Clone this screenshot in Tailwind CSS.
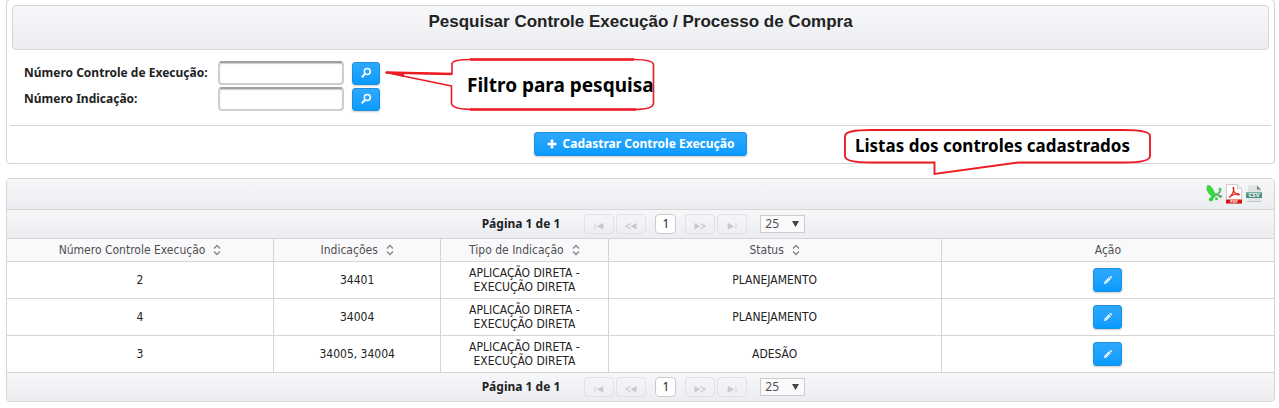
<!DOCTYPE html>
<html lang="pt-BR">
<head>
<meta charset="utf-8">
<meta name="viewport" content="width=device-width, initial-scale=1">
<title>Pesquisar Controle Execução / Processo de Compra</title>
<script src="https://cdn.jsdelivr.net/npm/@tailwindcss/browser@4"></script>
</head>
<body class="relative bg-white pr-1 pl-1.5 font-['Noto_Sans',sans-serif] text-xs text-[#222222]">
<svg class="hidden" aria-hidden="true">
  <symbol id="search" viewBox="0 0 12 12"><circle cx="7.3" cy="4.5" r="3" fill="none" stroke="#fff" stroke-width="1.5"/><path d="M5.2 6.8 1.8 10.2" stroke="#fff" stroke-width="2"/></symbol>
  <symbol id="pencil" viewBox="0 0 12 12"><path d="M1.2 10.8 1.8 8 7 2.8 9.2 5 4 10.2Z" fill="#fff"/><path d="M3 9 7.2 4.8" stroke="#3aa9f5" stroke-width="1" stroke-dasharray="1 .6"/><path d="M7.8 2 9 .9 11 3 9.9 4.1Z" fill="#fff"/></symbol>
  <symbol id="sort" viewBox="0 0 8 12"><path d="M1 4.5 4 1.5 7 4.5M1 7.5 4 10.5 7 7.5" fill="none" stroke="#858585" stroke-width="1.3"/></symbol>
  <symbol id="first" viewBox="0 0 12 8"><path d="M2 1.5V7M10 1.5V7L4.5 4.3Z" fill="#c9cacd" stroke="#c9cacd" stroke-width=".8"/></symbol>
  <symbol id="prev" viewBox="0 0 12 8"><path d="M5.5 1.5 1 4.2 5.5 7" fill="none" stroke="#c9cacd" stroke-width="1.2"/><path d="M11.5 1V7.5L5.5 4.2Z" fill="#c9cacd"/></symbol>
  <symbol id="next" viewBox="0 0 12 8"><path d="M.5 1V7.5L6.5 4.2Z" fill="#c9cacd"/><path d="M6.5 1.5 11 4.2 6.5 7" fill="none" stroke="#c9cacd" stroke-width="1.2"/></symbol>
  <symbol id="last" viewBox="0 0 12 8"><path d="M10 1.5V7M2 1.5V7L7.5 4.3Z" fill="#c9cacd" stroke="#c9cacd" stroke-width=".8"/></symbol>
</svg>

<main>
  <form class="-mt-px rounded border border-[#d5d5d5] px-[3px] pt-[5px] pb-[7px]">
    <header class="mx-0.5 h-[45px] rounded border border-[#d5d5d5] bg-linear-to-b from-[#f6f7f9] to-[#ebedf0] pt-1.5">
      <h1 class="text-center font-['Liberation_Sans',Arial,sans-serif] text-[17px] leading-5 font-bold">Pesquisar Controle Execução / Processo de Compra</h1>
    </header>
    <div class="grid grid-cols-[186px_126px_28px] items-center gap-x-2 gap-y-0.5 pt-[11px] pl-3.5 font-bold">
      <label for="controle" class="whitespace-nowrap">Número Controle de Execução:</label>
      <input id="controle" type="text" class="h-6 w-full rounded border-2 border-[#cfcfcf] border-t-[#a0a0a0] bg-white px-1 shadow-[inset_0_1px_1px_#cccccc]">
      <button type="button" aria-label="Pesquisar controle" class="flex h-[23px] items-center justify-center rounded-[3px] border border-[#1b8fe0] bg-linear-to-b from-[#2da8fd] to-[#069bff] shadow-[0_1px_2px_#cccccc]"><svg class="size-3"><use href="#search"/></svg></button>
      <label for="indicacao">Número Indicação:</label>
      <input id="indicacao" type="text" class="h-6 w-full rounded border-2 border-[#cfcfcf] border-t-[#a0a0a0] bg-white px-1 shadow-[inset_0_1px_1px_#cccccc]">
      <button type="button" aria-label="Pesquisar indicação" class="flex h-[23px] items-center justify-center rounded-[3px] border border-[#1b8fe0] bg-linear-to-b from-[#2da8fd] to-[#069bff] shadow-[0_1px_2px_#cccccc]"><svg class="size-3"><use href="#search"/></svg></button>
    </div>
    <hr class="mt-3.5 border-[#d5d5d5]">
    <div class="mt-1.5 flex justify-center">
      <button type="button" class="flex h-6 items-center gap-1.5 rounded-[3px] border border-[#1b8fe0] bg-linear-to-b from-[#2da8fd] to-[#069bff] px-3 font-bold whitespace-nowrap text-white shadow-[0_1px_2px_#cccccc]"><svg class="size-[10px]" viewBox="0 0 10 10"><path d="M5 .5V9.5M.5 5H9.5" stroke="#fff" stroke-width="2.6"/></svg>Cadastrar Controle Execução</button>
    </div>
  </form>

  <section class="mt-3.5 overflow-hidden rounded border border-[#d5d5d5]">
    <div class="flex h-[30px] items-center justify-end gap-1 bg-linear-to-b from-[#f6f7f9] to-[#ebedf0] pr-3">
      <a href="#" aria-label="Exportar Excel"><svg class="h-5 w-4" viewBox="0 0 16 20"><path d="M1.5 1.5Q4.500 1 6 4Q7.500 7 9.500 10.500Q10 13.500 7.500 13Q3 11.500 .8 5Z" fill="#2fe03a" stroke="#5aa865" stroke-width=".7"/><path d="M14.500 4.500Q14.500 9.500 10 10.500L15 12.500" fill="none" stroke="#63b873" stroke-width="2"/><path d="M8 12 5 15.500" stroke="#2bcf3a" stroke-width="2.400"/><circle cx="14" cy="5.200" r="1.400" fill="#3bdc49"/><circle cx="5" cy="15.300" r="2.100" fill="#22d738"/><circle cx="14.500" cy="12.500" r="1.400" fill="#6b9a78"/><circle cx="10.500" cy="14.800" r="1.500" fill="#33d044"/></svg></a>
      <a href="#" aria-label="Exportar PDF"><svg class="h-5 w-4" viewBox="0 0 16 20"><path d="M.5.5H11.5L15.5 4.5V19.5H.5Z" fill="#fff" stroke="#c4c4c4" stroke-width=".8"/><path d="M11.5.5V4.5H15.5" fill="#eee" stroke="#bbb" stroke-width=".6"/><path d="M3 13.5C5 12.5 8.5 7 7.8 4.2C7 1.5 6.5 6.5 9 9C11 11.2 14.2 11.5 13 10.1C11.5 9 6.5 10.3 3.2 13.5" fill="none" stroke="#e3261e" stroke-width="1.2"/><path d="M0 15.5H16V19.5H0Z" fill="#d81812"/><text x="8" y="19" text-anchor="middle" fill="#fff" class="text-[4px] font-bold">PDF</text></svg></a>
      <a href="#" aria-label="Exportar CSV"><svg class="h-5 w-4 overflow-visible" viewBox="0 0 16 20"><path d="M2 1.5H11L15 5.5V17.5H2Z" fill="#e1e2e3"/><path d="M11 1.5V5.5H15Z" fill="#777d7b"/><path d="M0 8H16V14H0Z" fill="#4a917c"/><path d="M0 8H16V9.5H0Z" fill="#7ab3a2"/><text x="8" y="13" text-anchor="middle" fill="#fff" class="text-[6px] font-bold">CSV</text><path d="M1 17.5H15" stroke="#c3c8c6"/></svg></a>
    </div>

    <nav aria-label="Paginação superior" class="flex h-[29px] items-center justify-center border-t border-[#d5d5d5] bg-linear-to-b from-[#f6f7f9] to-[#ebedf0] pl-1.5">
      <span class="mr-6 font-bold">Página 1 de 1</span>
      <div class="flex gap-0.5">
        <button type="button" disabled aria-label="Primeira" class="flex h-5 w-[30px] items-center justify-center rounded border border-[#e0e1e4]"><svg class="mt-1 h-2 w-3"><use href="#first"/></svg></button>
        <button type="button" disabled aria-label="Anterior" class="flex h-5 w-[30px] items-center justify-center rounded border border-[#e0e1e4]"><svg class="mt-1 h-2 w-3"><use href="#prev"/></svg></button>
      </div>
      <button type="button" aria-current="page" class="mx-[9px] flex h-5 w-[21px] items-center justify-center rounded border border-[#cccccc] bg-white">1</button>
      <div class="flex gap-0.5">
        <button type="button" disabled aria-label="Próxima" class="flex h-5 w-[30px] items-center justify-center rounded border border-[#e0e1e4]"><svg class="mt-1 h-2 w-3"><use href="#next"/></svg></button>
        <button type="button" disabled aria-label="Última" class="flex h-5 w-[30px] items-center justify-center rounded border border-[#e0e1e4]"><svg class="mt-1 h-2 w-3"><use href="#last"/></svg></button>
      </div>
      <div class="relative ml-[13px]">
        <select aria-label="Linhas por página" class="block h-[18px] w-[45px] appearance-none border border-[#cccccc] bg-[#fafafc] pl-1 leading-4 text-[#4f4f4f]"><option>25</option></select>
        <svg class="pointer-events-none absolute top-1.5 right-1.5 h-1.5 w-[7px]" viewBox="0 0 7 6"><path d="M0 0H7L3.5 6Z" fill="#444"/></svg>
      </div>
    </nav>

    <table class="w-full table-fixed border-separate border-spacing-0 text-center font-['DejaVu_Sans_Condensed','DejaVu_Sans',sans-serif] text-xs leading-[14px]">
      <colgroup><col class="w-[21%]"><col class="w-[13.2%]"><col class="w-[13.2%]"><col class="w-[26.3%]"><col class="w-[26.3%]"></colgroup>
      <thead class="bg-[#f9f9fb] text-[#4f4f4f]">
        <tr class="h-[23px]">
          <th class="border-t border-[#d5d5d5] font-normal"><span class="inline-flex items-center gap-2">Número Controle Execução<svg class="h-3 w-2"><use href="#sort"/></svg></span></th>
          <th class="border-t border-l border-[#d5d5d5] font-normal"><span class="inline-flex items-center gap-2">Indicações<svg class="h-3 w-2"><use href="#sort"/></svg></span></th>
          <th class="border-t border-l border-[#d5d5d5] font-normal"><span class="inline-flex items-center gap-2">Tipo de Indicação<svg class="h-3 w-2"><use href="#sort"/></svg></span></th>
          <th class="border-t border-l border-[#d5d5d5] font-normal"><span class="inline-flex items-center gap-2">Status<svg class="h-3 w-2"><use href="#sort"/></svg></span></th>
          <th class="border-t border-l border-[#d5d5d5] font-normal">Ação</th>
        </tr>
      </thead>
      <tbody>
        <tr class="h-[37px]">
          <td class="border-t border-[#d5d5d5]">2</td>
          <td class="border-t border-l border-[#d5d5d5]">34401</td>
          <td class="border-t border-l border-[#d5d5d5]">APLICAÇÃO DIRETA -<br>EXECUÇÃO DIRETA</td>
          <td class="border-t border-l border-[#d5d5d5]">PLANEJAMENTO</td>
          <td class="border-t border-l border-[#d5d5d5]"><button type="button" aria-label="Editar 2" class="mx-auto flex h-6 w-[29px] items-center justify-center rounded-[3px] border border-[#1b8fe0] bg-linear-to-b from-[#2da8fd] to-[#069bff] shadow-[0_1px_2px_#cccccc]"><svg class="size-[10px]"><use href="#pencil"/></svg></button></td>
        </tr>
        <tr class="h-[37px]">
          <td class="border-t border-[#d5d5d5]">4</td>
          <td class="border-t border-l border-[#d5d5d5]">34004</td>
          <td class="border-t border-l border-[#d5d5d5]">APLICAÇÃO DIRETA -<br>EXECUÇÃO DIRETA</td>
          <td class="border-t border-l border-[#d5d5d5]">PLANEJAMENTO</td>
          <td class="border-t border-l border-[#d5d5d5]"><button type="button" aria-label="Editar 4" class="mx-auto flex h-6 w-[29px] items-center justify-center rounded-[3px] border border-[#1b8fe0] bg-linear-to-b from-[#2da8fd] to-[#069bff] shadow-[0_1px_2px_#cccccc]"><svg class="size-[10px]"><use href="#pencil"/></svg></button></td>
        </tr>
        <tr class="h-[37px]">
          <td class="border-t border-[#d5d5d5]">3</td>
          <td class="border-t border-l border-[#d5d5d5]">34005, 34004</td>
          <td class="border-t border-l border-[#d5d5d5]">APLICAÇÃO DIRETA -<br>EXECUÇÃO DIRETA</td>
          <td class="border-t border-l border-[#d5d5d5]">ADESÃO</td>
          <td class="border-t border-l border-[#d5d5d5]"><button type="button" aria-label="Editar 3" class="mx-auto flex h-6 w-[29px] items-center justify-center rounded-[3px] border border-[#1b8fe0] bg-linear-to-b from-[#2da8fd] to-[#069bff] shadow-[0_1px_2px_#cccccc]"><svg class="size-[10px]"><use href="#pencil"/></svg></button></td>
        </tr>
      </tbody>
    </table>

    <nav aria-label="Paginação inferior" class="flex h-[29px] items-center justify-center border-t border-[#d5d5d5] bg-linear-to-b from-[#f6f7f9] to-[#ebedf0] pl-1.5">
      <span class="mr-6 font-bold">Página 1 de 1</span>
      <div class="flex gap-0.5">
        <button type="button" disabled aria-label="Primeira" class="flex h-5 w-[30px] items-center justify-center rounded border border-[#e0e1e4]"><svg class="mt-1 h-2 w-3"><use href="#first"/></svg></button>
        <button type="button" disabled aria-label="Anterior" class="flex h-5 w-[30px] items-center justify-center rounded border border-[#e0e1e4]"><svg class="mt-1 h-2 w-3"><use href="#prev"/></svg></button>
      </div>
      <button type="button" aria-current="page" class="mx-[9px] flex h-5 w-[21px] items-center justify-center rounded border border-[#cccccc] bg-white">1</button>
      <div class="flex gap-0.5">
        <button type="button" disabled aria-label="Próxima" class="flex h-5 w-[30px] items-center justify-center rounded border border-[#e0e1e4]"><svg class="mt-1 h-2 w-3"><use href="#next"/></svg></button>
        <button type="button" disabled aria-label="Última" class="flex h-5 w-[30px] items-center justify-center rounded border border-[#e0e1e4]"><svg class="mt-1 h-2 w-3"><use href="#last"/></svg></button>
      </div>
      <div class="relative ml-[13px]">
        <select aria-label="Linhas por página" class="block h-[18px] w-[45px] appearance-none border border-[#cccccc] bg-[#fafafc] pl-1 leading-4 text-[#4f4f4f]"><option>25</option></select>
        <svg class="pointer-events-none absolute top-1.5 right-1.5 h-1.5 w-[7px]" viewBox="0 0 7 6"><path d="M0 0H7L3.5 6Z" fill="#444"/></svg>
      </div>
    </nav>
  </section>
</main>

<aside class="absolute top-[57px] left-96 h-[54px] w-[271px] text-black">
  <svg class="absolute inset-0 h-full w-full" viewBox="0 0 271 54"><path d="M2 15.5 68 17V7Q68 2.5 88 2.5H250Q269.5 2.5 269.5 8V46Q269.5 52.5 250 52.5H90Q67.5 52.5 67.5 46V29Z" fill="#fff" stroke="#ed1c24" stroke-width="1.6" stroke-linejoin="round"/><path d="M2 15.5 68 17M86 2.5H250M86 52.5H252" stroke="#ed1c24" stroke-width="2.4"/><path d="M1 15.2 20 16.2 20 20Z" fill="#ed1c24"/></svg>
  <p class="relative pt-4 pl-[83px] text-[19px] leading-6 font-bold whitespace-nowrap">Filtro para pesquisa</p>
</aside>

<aside class="absolute top-[128px] left-[843px] h-[48px] w-[309px] text-black">
  <svg class="absolute inset-0 h-full w-full" viewBox="0 0 309 48"><path d="M2 8Q2 2 28 2H281Q307 2 307 8V28Q307 34.5 281 34.5H175L91.5 46V34.5H28Q2 34.5 2 28Z" fill="#fff" stroke="#ed1c24" stroke-width="1.9"/></svg>
  <p class="relative pt-1.5 pl-3 text-[17px] leading-6 font-bold whitespace-nowrap">Listas dos controles cadastrados</p>
</aside>
</body>
</html>
